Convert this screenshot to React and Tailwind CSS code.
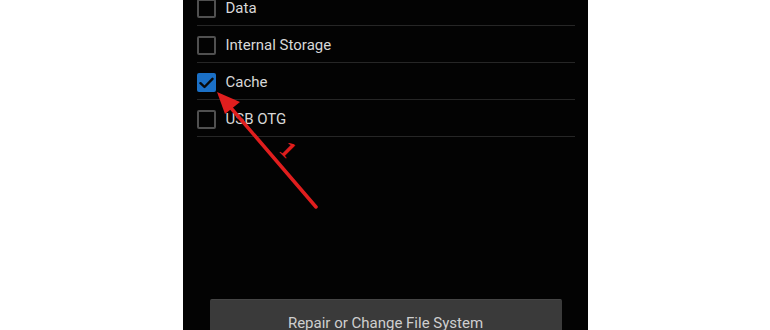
import React from "react";

function Box({ checked }) {
  if (checked) {
    return (
      <div className="w-[19px] h-[19px] rounded-[2px] bg-[#1b70c6] flex items-center justify-center shrink-0">
        <svg width="15" height="12" viewBox="0 0 15 12">
          <path d="M1.5 6.2 L5.5 10 L13.5 1.8" fill="none" stroke="#0a0a0a" strokeWidth="2.4" strokeLinecap="round" strokeLinejoin="round" />
        </svg>
      </div>
    );
  }
  return <div className="w-[19px] h-[19px] rounded-[2px] border-2 border-[#505050] shrink-0" />;
}

function Row({ label, checked, first }) {
  return (
    <div className={`flex items-center gap-[10px] border-b border-[#262626] pt-[3px] ${first ? "h-[38px]" : "h-[37px]"}`}>
      <Box checked={checked} />
      <span className="text-[15px] text-[#d8d8d8] leading-none">{label}</span>
    </div>
  );
}

export default function App() {
  return (
    <div className="w-[770px] h-[330px] bg-white flex justify-center overflow-hidden" style={{ fontFamily: "Roboto, 'Liberation Sans', sans-serif" }}>
      <div className="relative w-[405px] h-[330px] bg-[#030303] flex flex-col overflow-hidden">
        <div className="flex flex-col ml-[14px] mr-[13px] -mt-[12px]">
          <Row label="Data" first />
          <Row label="Internal Storage" />
          <Row label="Cache" checked />
          <Row label="USB OTG" />
        </div>
        <div className="ml-[27px] mr-[26px] mt-[162px] h-[48px] shrink-0 bg-[#3a3a3a] border-t border-[#454545] rounded-[2px] flex items-center justify-center">
          <span className="text-[15px] text-[#cfcfcf] leading-none">Repair or Change File System</span>
        </div>
        <svg className="absolute left-0 top-0 pointer-events-none" width="405" height="330" viewBox="0 0 405 330">
          <line x1="133" y1="207" x2="42" y2="101" stroke="#e01e1e" strokeWidth="3.5" strokeLinecap="round" />
          <polygon points="34,92 42,114 57,102" fill="#e01e1e" />
          <text x="0" y="0" fill="#e01e1e" fontSize="24" fontFamily="'Liberation Serif', serif" fontWeight="bold" transform="translate(95 151) rotate(45)">1</text>
        </svg>
      </div>
    </div>
  );
}
